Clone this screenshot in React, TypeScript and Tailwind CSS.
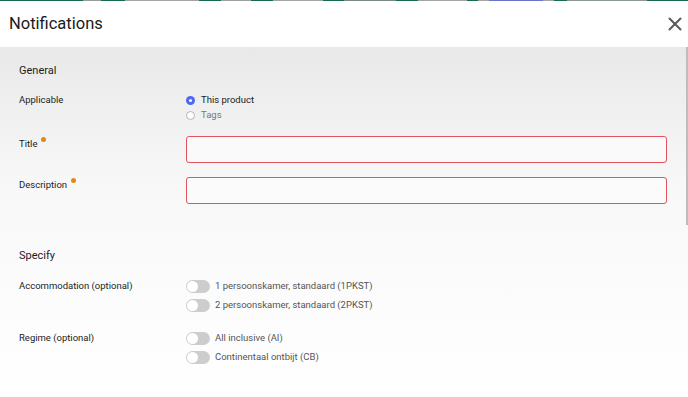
import React from 'react';
import { X } from 'lucide-react';

const strip = [
  { w: 83, c: 'bg-[#176b4d]' },
  { w: 18, c: 'bg-[#9a9a9a]' },
  { w: 24, c: 'bg-[#176b4d]' },
  { w: 74, c: 'bg-[#a3a3a3]' },
  { w: 22, c: 'bg-[#176b4d]' },
  { w: 30, c: 'bg-[#a0a0a0]' },
  { w: 22, c: 'bg-[#176b4d]' },
  { w: 50, c: 'bg-[#a3a3a3]' },
  { w: 21, c: 'bg-[#176b4d]' },
  { w: 52, c: 'bg-[#7d8a84]' },
  { w: 22, c: 'bg-[#176b4d]' },
  { w: 49, c: 'bg-[#a3a3a3]' },
  { w: 11, c: 'bg-[#176b4d]' },
  { w: 11, c: 'bg-[#a3a3a3]' },
  { w: 54, c: 'bg-[#6c74c9]' },
  { w: 11, c: 'bg-[#a3a3a3]' },
  { w: 13, c: 'bg-[#176b4d]' },
  { w: 80, c: 'bg-[#8e9993]' },
  { w: 41, c: 'bg-[#176b4d]' },
];

function Toggle() {
  return (
    <span className="relative inline-block w-[24px] h-[13px] rounded-full bg-[#cdcdcd] shrink-0">
      <span className="absolute left-[1px] top-[1px] w-[11px] h-[11px] rounded-full bg-white" />
    </span>
  );
}

function ToggleRow({ label }: { label: string }) {
  return (
    <div className="flex items-center gap-[5px] h-[19px]">
      <Toggle />
      <span className="text-[#555]">{label}</span>
    </div>
  );
}

function Required() {
  return <span className="inline-block w-[5px] h-[5px] rounded-full bg-[#e08a14] ml-[4px] -translate-y-[5px]" />;
}

export default function App() {
  return (
    <div
      className="relative w-[688px] h-[397px] overflow-hidden bg-white text-[#1c1c1c] text-[9.5px]"
      style={{ fontFamily: 'Roboto, "Liberation Sans", sans-serif' }}
    >
      <div className="flex h-[1px]">
        {strip.map((s, i) => (
          <div key={i} className={s.c} style={{ width: s.w }} />
        ))}
      </div>

      {/* Header */}
      <header className="flex items-center justify-between h-[46px] pl-[9px] pr-[2px]">
        <h1 className="text-[16.5px] text-[#1a1a1a]">Notifications</h1>
        <X className="w-[22px] h-[22px] text-[#5a5a5a]" strokeWidth={2.2} />
      </header>

      {/* Body */}
      <main className="h-[350px] bg-gradient-to-b from-[#e9e9e9] via-[#f8f8f8] via-40% to-white px-[19px] pt-[17px]">
        <h2 className="text-[11px] leading-[14px]">General</h2>

        <div className="flex mt-[15px]">
          <div className="w-[167px] leading-[14px]">Applicable</div>
          <div className="flex flex-col">
            <label className="flex items-center gap-[6px] h-[15px]">
              <span className="w-[9px] h-[9px] rounded-full bg-[#4f68ee] flex items-center justify-center">
                <span className="w-[3px] h-[3px] rounded-full bg-white" />
              </span>
              <span className="text-[#222]">This product</span>
            </label>
            <label className="flex items-center gap-[6px] h-[15px]">
              <span className="w-[9px] h-[9px] rounded-full border border-[#b5b5b5] bg-white" />
              <span className="text-[#777]">Tags</span>
            </label>
          </div>
        </div>

        <div className="flex mt-[13px]">
          <div className="w-[167px] pt-[1px] leading-[14px]">
            Title
            <Required />
          </div>
          <input className="w-[481px] h-[27px] rounded-[3px] border border-[#e4525e] bg-[#fafafa] outline-none" />
        </div>

        <div className="flex mt-[14px]">
          <div className="w-[167px] pt-[1px] leading-[14px]">
            Description
            <Required />
          </div>
          <input className="w-[481px] h-[27px] rounded-[3px] border border-[#e4525e] bg-[#fbfbfb] outline-none" />
        </div>

        <h2 className="text-[11px] leading-[14px] mt-[45px]">Specify</h2>

        <div className="flex mt-[14px]">
          <div className="w-[167px] pt-[2px] leading-[14px]">Accommodation (optional)</div>
          <div className="flex flex-col">
            <ToggleRow label="1 persoonskamer, standaard (1PKST)" />
            <ToggleRow label="2 persoonskamer, standaard (2PKST)" />
          </div>
        </div>

        <div className="flex mt-[14px]">
          <div className="w-[167px] pt-[2px] leading-[14px]">Regime (optional)</div>
          <div className="flex flex-col">
            <ToggleRow label="All inclusive (AI)" />
            <ToggleRow label="Continentaal ontbijt (CB)" />
          </div>
        </div>
      </main>

      {/* Scrollbar thumb */}
      <div className="absolute right-0 top-[47px] w-[2px] h-[178px] bg-[#bdbdbd]" />
    </div>
  );
}
